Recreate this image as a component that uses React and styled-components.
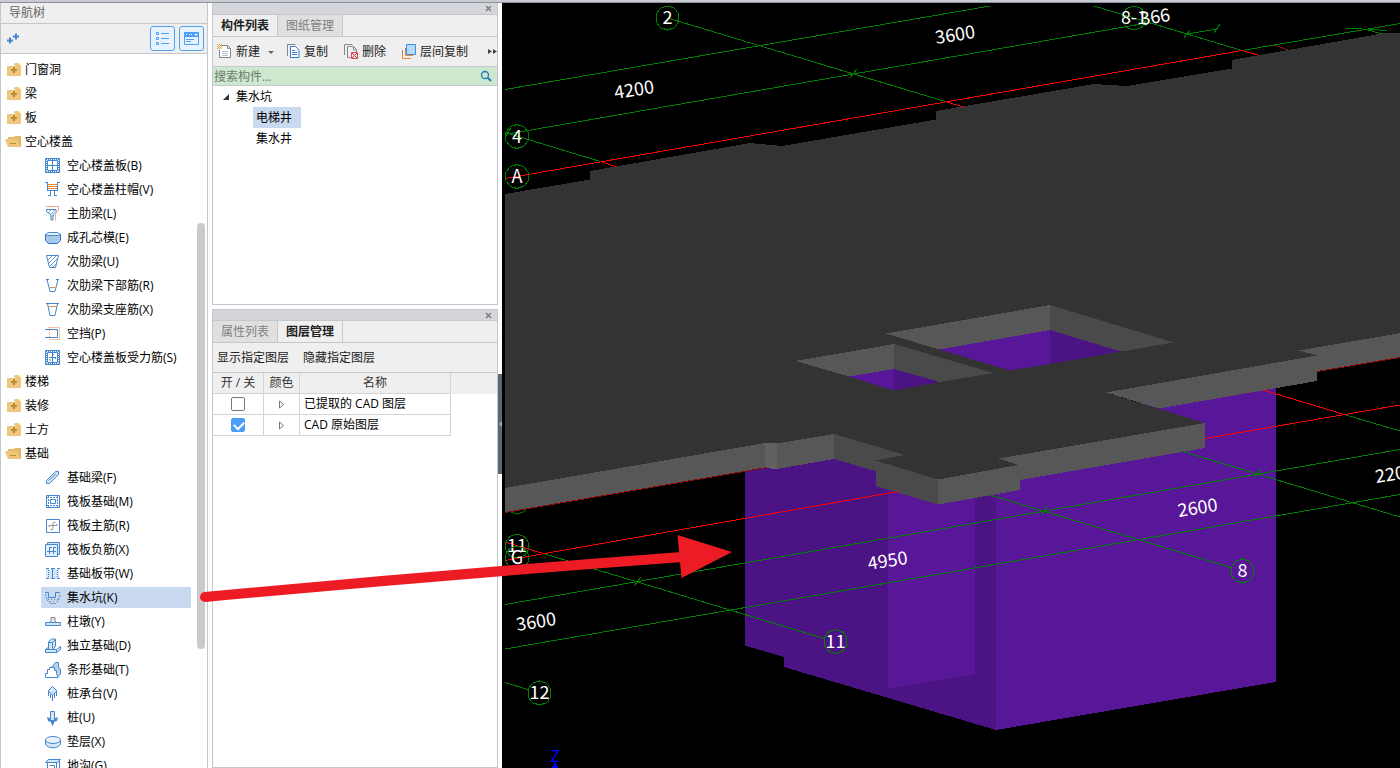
import React from "react";
import styled, { createGlobalStyle } from "styled-components";

const Global = createGlobalStyle`
  * { box-sizing: border-box; }
  body {
    margin: 0;
    background: #fff;
    color: #000;
    font-family: "Open Sans", "Noto Sans CJK SC", sans-serif;
    font-size: 12px;
    line-height: 20px;
  }
  button, input { font: inherit; color: inherit; }
`;

const edge = "#c4c7cf";
const face = "#efefef";
const blue = "#4486d0";
const orange = "#f0873c";

const Shell = styled.div`
  position: relative;
  display: flex;
  flex-direction: column;
  height: 100vh;
  overflow: hidden;
`;
const TopStrip = styled.div`
  flex: none;
  height: 3px;
  background: #c8ccd2;
  border-bottom: 1px solid #8e9199;
`;
const Workspace = styled.div`
  flex: 1;
  min-height: 0;
  display: flex;
`;

/* navigation */
const Nav = styled.nav`
  flex: none;
  width: 208px;
  display: flex;
  flex-direction: column;
  border: solid ${edge};
  border-width: 0 1px;
`;
const NavTitle = styled.h1`
  flex: none;
  margin: 0;
  height: 21px;
  padding-left: 8px;
  font-size: 12px;
  font-weight: 400;
  line-height: 20px;
  color: #666;
  background: ${face};
  border-bottom: 1px solid ${edge};
`;
const NavTools = styled.div`
  flex: none;
  display: flex;
  align-items: center;
  gap: 4px;
  height: 30px;
  padding: 0 3px 0 5px;
  background: ${face};
  border-bottom: 1px solid ${edge};
`;
const PlainButton = styled.button`
  display: flex;
  align-items: center;
  padding: 0;
  border: 0;
  background: none;
`;
const AddButton = styled(PlainButton)`
  margin-right: auto;
`;
const ViewButton = styled(PlainButton)`
  justify-content: center;
  width: 25px;
  height: 25px;
  border: 1px solid #55a0ee;
  border-radius: 3px;
  background: #e9f3fd;
`;
const NavBody = styled.div`
  flex: 1;
  min-height: 0;
  display: flex;
  overflow: hidden;
  padding-right: 2px;
`;
const Tree = styled.ul`
  flex: 1;
  margin: 0;
  padding: 3px 6px 0 0;
  list-style: none;
`;
const Branch = styled.ul`
  margin: 0;
  padding: 0 0 0 40px;
  list-style: none;
`;
const GroupButton = styled(PlainButton)`
  gap: 4px;
  height: 24px;
  padding: 2px 0 0 4px;
  white-space: nowrap;
`;
const LeafButton = styled(PlainButton)`
  gap: 6px;
  width: 100%;
  height: 21px;
  margin: 2px 0 1px;
  padding: 0 0 0 4px;
  white-space: nowrap;
  background: ${(p) => (p.$on ? "#c9d9f0" : "transparent")};
`;
const Leaf = styled.li`
  display: flow-root;
`;
const Track = styled.div`
  width: 8px;
  padding-top: 169px;
`;
const Thumb = styled.div`
  height: 426px;
  border-radius: 4px;
  background: #cacaca;
`;

/* dock panels */
const Dock = styled.div`
  flex: none;
  width: 286px;
  margin-left: 4px;
  display: flex;
  flex-direction: column;
  gap: 4px;
`;
const Panel = styled.section`
  display: flex;
  flex-direction: column;
  height: ${(p) => p.$height || "auto"};
  flex: ${(p) => (p.$height ? "none" : 1)};
  border: solid ${edge};
  border-width: 0 1px 1px;
  background: #fff;
`;
const PanelBar = styled.header`
  display: flex;
  align-items: center;
  justify-content: flex-end;
  height: 12px;
  padding-right: 5px;
  background: #d4d6db;
  border: solid ${edge};
  border-width: ${(p) => (p.$topped ? 1 : 0)}px 0 1px;
`;
const Tabs = styled.div`
  display: flex;
  height: 22px;
  background: ${face};
  border-bottom: 1px solid ${edge};
`;
const Tab = styled.button`
  width: 65px;
  padding: 0;
  border: 0;
  border-right: 1px solid ${edge};
  background: ${(p) => (p.$on ? face : "#e0e0e0")};
  color: ${(p) => (p.$on ? "#222" : "#808080")};
  font-weight: ${(p) => (p.$on ? 700 : 400)};
  line-height: 20px;
`;
const Tools = styled.div`
  display: flex;
  align-items: center;
  gap: ${(p) => p.$gap}px;
  height: 30px;
  padding-left: 4px;
  background: ${face};
  border-bottom: 1px solid ${edge};
  color: #222;
`;
const ToolButton = styled(PlainButton)`
  gap: 4px;
  white-space: nowrap;
`;
const MoreButton = styled(PlainButton)`
  margin-left: auto;
`;
const Search = styled.label`
  display: flex;
  align-items: center;
  height: 19px;
  padding-right: 5px;
  background: #cde8cf;
  border-bottom: 1px solid ${edge};
`;
const SearchInput = styled.input`
  flex: 1;
  min-width: 0;
  height: 18px;
  padding: 2px 1px 0;
  border: 0;
  outline: 0;
  background: none;
  &::placeholder { color: #6c7b6e; opacity: 1; }
`;
const Parts = styled.ul`
  margin: 0;
  padding: 0;
  list-style: none;
`;
const PartRoot = styled(PlainButton)`
  gap: 6px;
  height: 21px;
  padding-left: 9px;
`;
const SubParts = styled(Parts)`
  padding-left: 40px;
`;
const Part = styled(PlainButton)`
  height: 21px;
  padding: 0 9px 0 3px;
  background: ${(p) => (p.$on ? "#c9d9f0" : "transparent")};
`;
const Grid = styled.table`
  width: 100%;
  table-layout: fixed;
  border-collapse: separate;
  border-spacing: 0;
`;
const Cell = styled.td`
  height: 21px;
  padding: 0 4px;
  border: solid #d2d4d8;
  border-width: 0 1px 1px 0;
  line-height: 20px;
  text-align: ${(p) => (p.$left ? "left" : "center")};
  white-space: nowrap;
`;
const Head = styled(Cell)`
  padding: 0;
  font-weight: 400;
  color: #333;
  background: ${face};
`;
const Blank = styled.td`
  padding: 0;
  background: ${(p) => (p.$head ? face : "none")};
`;
const Col = styled.col`
  width: ${(p) => p.$w};
`;
const Check = styled.input`
  appearance: none;
  display: block;
  width: 14px;
  height: 14px;
  margin: 0 auto;
  border: 1px solid #777;
  border-radius: 2px;
  background: #fff;
  &:checked { background: #4c9ff6; border-color: #4c9ff6; }
  &:checked::before {
    content: "";
    display: block;
    width: 8px;
    height: 5px;
    margin: 2px;
    border: solid #fff;
    border-width: 0 0 2px 2px;
    transform: rotate(-45deg);
  }
`;
const Expand = styled(PlainButton)`
  margin: 0 auto;
`;
const Splitter = styled.div`
  flex: none;
  width: 4px;
  padding-top: 371px;
`;
const SplitHandle = styled.button`
  display: flex;
  align-items: center;
  width: 4px;
  height: 100px;
  padding: 0;
  border: 0;
  background: #5c6773;
`;
const Viewport = styled.main`
  flex: 1;
  min-width: 0;
  background: #000;
`;
const Scene = styled.svg`
  display: block;
  width: 100%;
  height: 100%;
  font-family: "Noto Sans CJK SC", sans-serif;
  font-size: 18px;
  text-anchor: middle;
`;
const Pointer = styled.svg`
  position: absolute;
  left: 200px;
  top: 530px;
  width: 540px;
  height: 80px;
  pointer-events: none;
`;
const Glyph = styled.svg`
  flex: none;
  display: block;
  fill: none;
`;

const Svg = ({ w = 16, h = 16, children }) => (
  <Glyph width={w} height={h} viewBox={`0 0 ${w} ${h}`} aria-hidden="true">{children}</Glyph>
);
const B = (p) => <path stroke={blue} {...p} />;
const O = (p) => <path stroke={orange} {...p} />;
const pale = "#d5e5f8";

const icons = {
  slab: <><B d="M.5.5h14v14H.5zM2.5 2.5h10v10h-10zM7.5 3v9M3 7.5h9" /><B d="M1 1.5h13M1 13.5h13M1.500 1v13M13.500 1v13" strokeDasharray="1 1" /></>,
  cap: <><O d="M3 2.5h9M3 4.5h9M3 6.5h9" /><B d="M0 .5h3M12 .5h3M2.5 0v9M12.5 0v9M2 8.5h11M5.5 9v4M9.5 9v4M3 13.5h3M9 13.5h3" /></>,
  main: <><path stroke="#f3a987" d="M1 .5h12.500v4l-3 3v7" /><B d="M1.500 3.500h9.500v2l-3 3v5.500h-2v-5.500l-4.500-3z" /><B d="M3 7l4-4M6 8l4-4M6 12l3-3" strokeWidth=".7" /></>,
  core: <><path fill="#a9c8ee" stroke="#2f71bb" d="M.500 4.500h15v6l-3 3h-9l-3-3z" /><path fill="#e7f1fc" stroke={blue} d="M3.500 2.500h9l3 2-2 1h-11l-2-1z" /></>,
  rib: <><B d="M1.500 1.500h12l-3 12h-6z" /><B d="M3 6l4-4M4 9l7-7M5 12l7-7M8 13l3-3" strokeWidth=".8" /></>,
  ribLow: <><B d="M1 1.500h3M11 1.500h3M2 1.500l3 12h5l3-12" /><O d="M5 9.500h5" strokeWidth="1" /></>,
  ribTop: <><B d="M1 1.500h13M2.500 1.500l2.500 12h5l2.500-12" /><O d="M4 4.500h7" /></>,
  gap: <><B d="M0 3.500h12.500v8H0" /><O d="M3.500 1.500h11v12h-11M4.500 4v7" strokeDasharray="1 1" /></>,
  force: <><B d="M.5.5h14v14H.5zM2.5 2.5h10v10h-10z" /><B d="M1 1.5h13M1 13.5h13M1.500 1v13M13.500 1v13" strokeDasharray="1 1" /><B d="M7.500 3v9M4 7.500h7M9 4L7 6M5 9v2M10 9l1-1" /></>,
  beam: <><B fill={pale} d="M1.500 13.500v-3l9-9h3v3l-9 9z" /><B d="M4 10.500l7-7" /></>,
  raft: <><B d="M1.500 1.500h13v12h-13zM5.500 5.500h5v4h-5z" /><B d="M2 3.500h12M2 11.500h12M3.500 2v11M12.500 2v11" strokeDasharray="2 1" /></>,
  raftMain: <><B d="M1.500 1.500h13v13h-13z" /><path stroke="#8b9299" d="M10.500 4.500q-2.500-1-2.500 1v5q0 2-2.500 1M4 9v-1.500h8V6" /></>,
  raftNeg: <><B fill={pale} d="M2.500 2.500V.500h12v12h-2" /><B fill="#e3eefb" d="M.500 2.500h12v12h-12z" /><B d="M4.500 5v7M8.500 5v7M2 9.500h9M5 5.500h2M9 5.500h2" /></>,
  strip: <><path fill={pale} d="M1 3h13v10H1z" /><B d="M1 2.500h3M6 2.500h4M12 2.500h3M1 12.500h3M6 12.500h4M12 12.500h3M7.500 3v9" /><B d="M3.500 4v9M12.500 4v9" strokeDasharray="1 1" /></>,
  pit: <><B d="M0 2.500h3.500v5h7v-5H15" /><B d="M0 4l3 7 2.500 2.500h5L13 11l2.500-7" strokeDasharray="2 1" /><path stroke="#73808c" d="M3 9.500h10M5 11.500h6" strokeDasharray="1 2" /></>,
  pier: <><path stroke="#858b91" fill="#e8e8e8" d="M5 8.500l1-2v-3h4v3l1 2" /><B fill={pale} d="M.500 8.500h15v3H.500z" /></>,
  iso: <><B fill={pale} d="M.500 11.500h11v3H.500zM11.500 11.500l4-3v3l-4 3M3.500 11v-7l3-3h4v7l-2 3" /><B d="M3.500 4.500h4l3-3M7.500 4.500v6M1 11l3-2" /></>,
  footing: <><B fill="#b9d1ef" d="M6.500 5.500l4-5h3v5l2 1.500v5l-3 3" /><B fill="#fff" d="M.500 15.500v-4h2V7.500h2v-2h5v3h2v3l1.500 4z" /></>,
  pileCap: <><B fill={pale} d="M7.500 .500l4.500 4.500-4.500 4-4.500-4z" /><B d="M3.500 6v4M11.500 6v4M7.500 9v6M5.500 8v4M9.500 8v4" /></>,
  pile: <><path fill={blue} d="M2 7l4 1.500h3L13 7l-1 4-3 1v1l-1.500 3L6 13v-1l-3-1z" /><B fill={pale} d="M5.500 1.500h4v9h-4z" /></>,
  cushion: <><B fill={pale} d="M.500 6v4c2 5 13 5 15 0V6" /><ellipse cx="8" cy="6" rx="7.500" ry="3.500" fill="#eaf2fc" stroke={blue} /></>,
  trench: <><B fill={pale} d="M.500 4.500l3-3h12l-3 3z" /><B d="M2.500 5v10M11.500 5v10M14.500 3v9l-3 3M4.500 7.500h5v7" /></>,
};

const FolderIcon = ({ open }) => (
  <Svg>
    {open ? (
      <>
        <path fill="#e2b767" d="M3 3h6l1-1h6v11h-2L12 5H3z" />
        <path fill="#efc67c" d="M0 5h12l3 8H3z" />
        <path stroke="#b98d33" d="M5 9.500h6" />
      </>
    ) : (
      <>
        <path fill="#efc67c" d="M2 4h7V2l1-1h4l1 2h1v11H2z" />
        <path stroke="#fff" d="M2 3.500h8" />
        <path stroke="#b98d33" strokeWidth="2" d="M6 8h6M9 5v6" />
      </>
    )}
  </Svg>
);

const nav = [
  { label: "门窗洞" },
  { label: "梁" },
  { label: "板" },
  {
    label: "空心楼盖",
    items: [
      ["空心楼盖板(B)", "slab"], ["空心楼盖柱帽(V)", "cap"], ["主肋梁(L)", "main"],
      ["成孔芯模(E)", "core"], ["次肋梁(U)", "rib"], ["次肋梁下部筋(R)", "ribLow"],
      ["次肋梁支座筋(X)", "ribTop"], ["空挡(P)", "gap"], ["空心楼盖板受力筋(S)", "force"],
    ],
  },
  { label: "楼梯" },
  { label: "装修" },
  { label: "土方" },
  {
    label: "基础",
    items: [
      ["基础梁(F)", "beam"], ["筏板基础(M)", "raft"], ["筏板主筋(R)", "raftMain"],
      ["筏板负筋(X)", "raftNeg"], ["基础板带(W)", "strip"], ["集水坑(K)", "pit"],
      ["柱墩(Y)", "pier"], ["独立基础(D)", "iso"], ["条形基础(T)", "footing"],
      ["桩承台(V)", "pileCap"], ["桩(U)", "pile"], ["垫层(X)", "cushion"], ["地沟(G)", "trench"],
    ],
  },
];

const CloseIcon = () => (
  <PlainButton aria-label="关闭">
    <Svg w={7} h={7}><path stroke="#777" strokeWidth="1.300" d="M1 1l5 5M6 1L1 6" /></Svg>
  </PlainButton>
);

const NewIcon = () => (
  <Svg w={15} h={15}>
    <path fill="#fff" stroke="#7f8992" d="M4.500 1.500h6l3 3v9h-11V6" />
    <path stroke="#7f8992" d="M10.500 1.500v3h3" />
    <path stroke="#b9bfc5" d="M5 7.500h6M5 9.500h6M5 11.500h6" />
    <path stroke="#eba52c" d="M0 .500h5M0 2.500h5M0 4.500h5" strokeDasharray="1 1" />
    <path stroke="#eba52c" d="M1 1.500h4M1 3.500h4" strokeDasharray="1 1" />
  </Svg>
);
const CopyIcon = () => (
  <Svg w={13} h={15}>
    <path stroke="#7f8992" d="M.500 12V.500h8" />
    <path fill="#fff" stroke="#2f7bd0" d="M3.500 2.500h5l3.500 3.500v7.500H3.500z" />
    <path stroke="#2f7bd0" d="M5 6.500h3M5 8.500h5M5 10.500h5" />
  </Svg>
);
const DeleteIcon = () => (
  <Svg w={17} h={15}>
    <path stroke="#7f8992" d="M3.500 11V.500h8M6.500 13.500v-11h6l3 3V8M12.500 3v3h3M6.500 13.500h3" />
    <path fill="#fbe0e0" stroke="#d94848" d="M10.500 8.500h6v6h-6zM11 9l5 5M16 9l-5 5" />
  </Svg>
);
const FloorCopyIcon = () => (
  <Svg w={17} h={15}>
    <path stroke={orange} d="M3.500 6v8.500H12M6.500 4v7.500H14" />
    <path stroke="#7f8992" d="M3.500 7v3M6.500 4v3" />
    <path fill="#b9d9fb" stroke="#3f8ee0" d="M7.500.500h9v10h-9z" />
  </Svg>
);

const light = "#575757";
const dark = "#4a4a4a";
const violet = "#581698";
const deep = "#4b1383";
const polygons = [
  [deep, "744.5,465 888,440 996,480 996,730 784,667 784,657 744.5,645.5"],
  [violet, "888,480 975,480 975,674 888,689"],
  [violet, "996,440 1275.5,370 1275.5,682 996,730"],
  ["#333", "505,194 590,179.500 590,171 750,143 782,146 936,119.500 936,111 1094,84 1127,86 1231.500,68.500 1231.500,60 1382,33.500 1401,33 1401,333 1299,350.500 1317,355.500 1106,392.500 1205,423 999,458.500 1018,465 938,479.500 875.500,460.500 905,455 834,434 777,443.500 765,443 505,488"],
  [light, "1106,392.500 1317,355.500 1299,350.500 1401,333 1401,357.500 1317,371.500 1317,381 1159,408.500"],
  [light, "1205,423 1205,448 1020,480 1020,490 938,504.500 938,479.500 1018,465 999,458.500"],
  [dark, "938,479.500 938,504.500 875.500,486 875.500,471 834,459 834,434 905,455 875.500,460.500"],
  [light, "834,434 834,459 777,469 777,443.500"],
  ["#616161", "765,443 777,443.500 777,469 765,468"],
  [light, "505,488 765,443 765,468 505,512.500"],
  [light, "886,333.500 1050,305 1050,330 939,349.500"],
  [dark, "1050,305 1174,342.500 1121,351.500 1050,330"],
  [violet, "939,349.500 1050,330 1050,364 1010,370.500"],
  [deep, "1050,330 1121,351.500 1050,364"],
  [light, "795.500,361 894,344 894,369 849,376.500"],
  [dark, "894,344 993.500,373 940,382 894,369"],
  [violet, "849,376.500 894,369 894,390.500"],
  [deep, "894,369 940,382 894,390.500"],
];
const greenLines =
  "M505 89.500L990 6M667.500 18L947 102M505 134.500L1150 22.500M850 78l7-9M505 132.500L602 162M505 137l6-9" +
  "M1242 50.500L1400 23.500M1094 6L1242 50.500M1187 34L1217 29M1184 38l6-8M1214 33l6-9M1346 28L1387 30.500M1365 29L1382 34" +
  "M545 554L824 638.500M505 604.500L1400 449.500M505 649L1400 494.500M990 495L1231 567.500M1041 515l7-9M1181 451L1400 517" +
  "M1254 478l7-9M1346 415L1400 431M505 682.500L528 689.500M634 586l7-9M1145 26l6-8";
const redLines =
  "M947 102L963 107M602 162L617 167M505 178.500L1242 50.500L1258 55M505 560.500L898 491.500M1205 438.500L1400 405" +
  "M505 542L545 554M1263 390L1346 415";
const darkRedLines = "M1274 45L1288 50M505 512.500L767 467.500M1317 371.500L1400 357.500";
const bubbles = [
  [667.5, 18, "2"], [517, 136.5, "4"], [517, 176.5, "A"], [1134, 18, "8-1"], [517, 546, "11"],
  [517, 558, "G"], [1242.5, 571, "8"], [835.5, 641.5, "11"], [539.5, 693, "12"],
];
const dims = [
  [955, 34, "3600"], [634, 89, "4200"], [1155, 16, "366"], [1197.5, 507, "2600"],
  [1395, 473, "2200"], [887.5, 560, "4950"], [536, 621, "3600"],
];
const ring = (x, y) =>
  Array.from({ length: 10 }, (_, i) => {
    const a = (i * Math.PI) / 5 - Math.PI / 2;
    return `${x + 12 * Math.cos(a)},${y + 12 * Math.sin(a)}`;
  }).join(" ");

const Model = () => (
  <Scene viewBox="502 3 898 765" preserveAspectRatio="xMinYMin slice" role="img" aria-label="三维模型">
    <clipPath id="stage"><rect x="505" y="6" width="895" height="762" /></clipPath>
    <g clipPath="url(#stage)">
      <polygon points={ring(517, 502)} fill="none" stroke="#008000" />
      {polygons.map(([fill, points]) => <polygon key={points} fill={fill} points={points} shapeRendering="crispEdges" />)}
      <g fill="none" shapeRendering="crispEdges">
        <path d={greenLines} stroke="#008000" />
        <path d={darkRedLines} stroke="#8c0a0a" />
        <path d={redLines} stroke="#f00" />
      </g>
      {bubbles.map(([x, y, t]) => (
        <g key={`${x}-${y}`}>
          <polygon points={ring(x, y)} fill="none" stroke="#008000" shapeRendering="crispEdges" />
          <text x={x} y={y + 6} fill="#fff">{t}</text>
        </g>
      ))}
      {dims.map(([x, y, t]) => (
        <text key={`${x}-${y}`} x={x} y={y + 7} fill="#fff" transform={`rotate(-9 ${x} ${y})`}>{t}</text>
      ))}
      <text x="555" y="762" fill="#00f" fontSize="16">Z</text>
      <path d="M555 762l4 7h-8z" fill="#00f" />
    </g>
  </Scene>
);

export default function App() {
  return (
    <>
      <Global />
      <Shell>
        <TopStrip />
        <Workspace>
          <Nav>
            <NavTitle>导航树</NavTitle>
            <NavTools>
              <AddButton aria-label="添加">
                <Svg w={14} h={14}><path stroke={blue} strokeWidth="2" d="M1 8.500h6M4 5.500v6M7 4.500h6M10 1.500v6" /></Svg>
              </AddButton>
              <ViewButton aria-label="列表视图">
                <Svg>
                  <path stroke="#4c9ff6" d="M1.500 1.500h2v2h-2zM1.500 6.500h2v2h-2zM1.500 11.500h2v2h-2zM6 2.500h8M6 7.500h8M6 12.500h8" />
                </Svg>
              </ViewButton>
              <ViewButton aria-label="窗口视图">
                <Svg>
                  <path stroke="#4c9ff6" d="M.500 1.500h14v12H.500z" />
                  <path fill="#4c9ff6" d="M0 1h15v5H0z" />
                  <path stroke="#fff" d="M2 3.500h1M5 3.500h1M7 3.500h1" />
                  <path fill="#fff" d="M10 3h4l-2 2z" />
                  <path stroke="#4c9ff6" d="M2 8.500h8M2 10.500h5" />
                </Svg>
              </ViewButton>
            </NavTools>
            <NavBody>
              <Tree>
                {nav.map((group) => (
                  <li key={group.label}>
                    <GroupButton><FolderIcon open={!!group.items} />{group.label}</GroupButton>
                    {group.items && (
                      <Branch>
                        {group.items.map(([label, icon]) => (
                          <Leaf key={label}>
                            <LeafButton $on={icon === "pit"}><Svg>{icons[icon]}</Svg>{label}</LeafButton>
                          </Leaf>
                        ))}
                      </Branch>
                    )}
                  </li>
                ))}
              </Tree>
              <Track><Thumb /></Track>
            </NavBody>
          </Nav>

          <Dock>
            <Panel $height="302px">
              <PanelBar><CloseIcon /></PanelBar>
              <Tabs><Tab $on>构件列表</Tab><Tab>图纸管理</Tab></Tabs>
              <Tools $gap={13}>
                <ToolButton>
                  <NewIcon />新建
                  <Svg w={10} h={6}><path fill="#666" d="M4 2h6L7 5z" /></Svg>
                </ToolButton>
                <ToolButton><CopyIcon />复制</ToolButton>
                <ToolButton><DeleteIcon />删除</ToolButton>
                <ToolButton><FloorCopyIcon />层间复制</ToolButton>
                <MoreButton aria-label="更多">
                  <Svg w={9} h={7}><path fill="#444" d="M0 1l4 2.500L0 6zM5 1l4 2.500L5 6z" /></Svg>
                </MoreButton>
              </Tools>
              <Search>
                <SearchInput type="text" placeholder="搜索构件..." aria-label="搜索构件" />
                <Svg w={12} h={12}>
                  <circle cx="5" cy="5" r="3.500" stroke="#1c7fb5" strokeWidth="1.300" />
                  <path stroke="#1c7fb5" strokeWidth="2" d="M7.500 7.500L11 11" />
                </Svg>
              </Search>
              <Parts>
                <li>
                  <PartRoot><Svg w={8} h={8}><path fill="#333" d="M7 1v6H1z" /></Svg>集水坑</PartRoot>
                  <SubParts>
                    <li><Part $on>电梯井</Part></li>
                    <li><Part>集水井</Part></li>
                  </SubParts>
                </li>
              </Parts>
            </Panel>

            <Panel>
              <PanelBar $topped><CloseIcon /></PanelBar>
              <Tabs><Tab>属性列表</Tab><Tab $on>图层管理</Tab></Tabs>
              <Tools $gap={14}>
                <ToolButton>显示指定图层</ToolButton>
                <ToolButton>隐藏指定图层</ToolButton>
              </Tools>
              <Grid>
                <colgroup><Col $w="51px" /><Col $w="36px" /><Col $w="151px" /><Col $w="auto" /></colgroup>
                <thead>
                  <tr>
                    <Head as="th">开 / 关</Head>
                    <Head as="th">颜色</Head>
                    <Head as="th">名称</Head>
                    <Blank $head />
                  </tr>
                </thead>
                <tbody>
                  {[["已提取的 CAD 图层", false], ["CAD 原始图层", true]].map(([name, on]) => (
                    <tr key={name}>
                      <Cell><Check type="checkbox" defaultChecked={on} aria-label={name} /></Cell>
                      <Cell>
                        <Expand aria-label="展开"><Svg w={7} h={9}><path stroke="#777" d="M1.500 1v7l4-3.500z" /></Svg></Expand>
                      </Cell>
                      <Cell $left>{name}</Cell>
                      <Blank />
                    </tr>
                  ))}
                </tbody>
              </Grid>
            </Panel>
          </Dock>

          <Splitter>
            <SplitHandle aria-label="折叠">
              <Svg w={4} h={8}><path fill="#aab3bd" d="M4 1v6L1 4z" /></Svg>
            </SplitHandle>
          </Splitter>
          <Viewport><Model /></Viewport>
        </Workspace>
        <Pointer viewBox="200 530 540 80" aria-hidden="true">
          <path d="M205 597Q440 575 682 557" stroke="#ed1c24" strokeWidth="10" strokeLinecap="round" fill="none" />
          <polygon points="677.500,535 732,552 681.500,578" fill="#ed1c24" />
        </Pointer>
      </Shell>
    </>
  );
}
